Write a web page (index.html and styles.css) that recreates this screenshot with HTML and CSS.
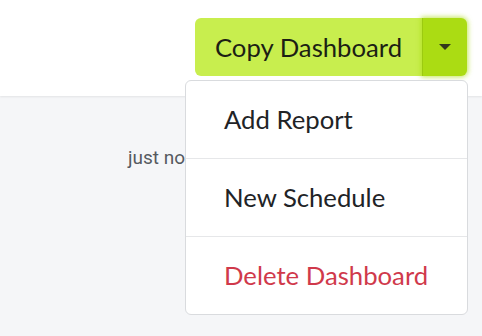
FILE: index.html
```html
<!DOCTYPE html>
<html>
<head>
    <title>Dashboard Actions</title>
    <link rel="stylesheet" href="styles.css">
</head>
<body>

<!-- Top bar with the split action button -->
<div class="topbar">
    <div class="split-button">
        <button class="main-action">Copy Dashboard</button>
        <button class="toggle"><span class="caret"></span></button>

        <!-- Opened menu -->
        <div class="menu">
            <div class="menu-item">Add Report</div>
            <div class="menu-item">New Schedule</div>
            <div class="menu-item danger">Delete Dashboard</div>
        </div>
    </div>
</div>

<div class="content">
    <span class="timestamp">just now</span>
</div>

</body>
</html>
```

FILE: styles.css
```css
html, body {
    margin: 0;
    height: 100%;
}
body {
    font-family: Lato, "Liberation Sans", sans-serif;
    background-color: #f5f6f8;
}
.topbar {
    height: 96px;
    background-color: #ffffff;
    box-shadow: 0 1px 2px rgba(0, 0, 0, 0.08);
    display: flex;
    justify-content: flex-end;
    padding: 18px 15px 0 0;
    box-sizing: border-box;
    position: relative;
    z-index: 1;
}
.split-button {
    display: flex;
    height: 58px;
    position: relative;
}
.split-button button {
    border: none;
    margin: 0;
    font-family: inherit;
    cursor: pointer;
}
.main-action {
    width: 227px;
    background-color: #c8ee4e;
    border: 1px solid #b5dd36;
    border-right: none;
    border-radius: 6px 0 0 6px;
    color: #1c1f14;
    font-size: 25.7px;
    padding: 0;
}
.split-button .toggle {
    width: 45px;
    background-color: #abdc13;
    border-left: 1px solid #9cca10;
    border-radius: 0 6px 6px 0;
    box-shadow: 0 0 5px 1px rgba(171, 220, 19, 0.7);
    display: flex;
    align-items: center;
    justify-content: center;
    padding: 0;
}
.caret {
    width: 0;
    height: 0;
    border-left: 6px solid transparent;
    border-right: 6px solid transparent;
    border-top: 6px solid #33391c;
}
.menu {
    position: absolute;
    top: 62px;
    right: -1px;
    width: 281px;
    background-color: #ffffff;
    border: 1px solid #d9dbde;
    border-radius: 6px;
}
.menu-item {
    height: 77px;
    line-height: 77px;
    padding-left: 38px;
    font-size: 25.7px;
    color: #212326;
    border-bottom: 1px solid #e6e7e9;
}
.menu-item:last-child {
    border-bottom: none;
}
.menu-item.danger {
    color: #d0394b;
}
.content {
    padding: 50px 0 0 128px;
}
.timestamp {
    font-family: Roboto, "Liberation Sans", sans-serif;
    font-size: 19px;
    color: #555a60;
}
```
